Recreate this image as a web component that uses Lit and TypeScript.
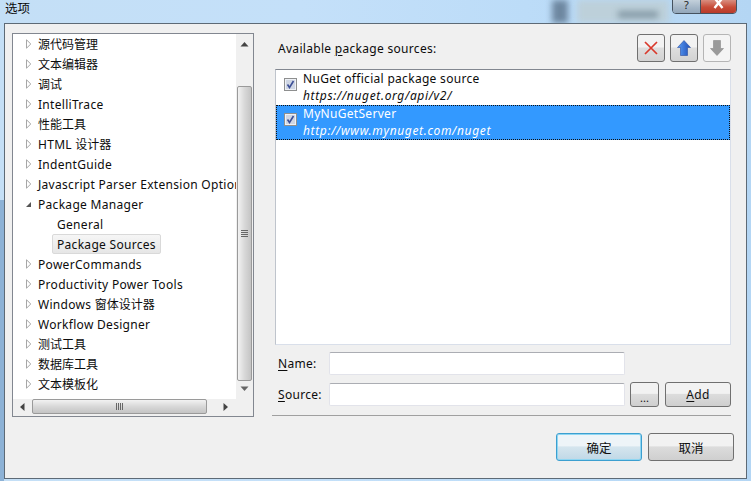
import { LitElement, html, css, svg } from "lit";
import { customElement } from "lit/decorators.js";

type Row = { t: string; kind: "closed" | "open" | "leaf"; sel?: boolean };
const rows: Row[] = [
  { t: "源代码管理", kind: "closed" },
  { t: "文本编辑器", kind: "closed" },
  { t: "调试", kind: "closed" },
  { t: "IntelliTrace", kind: "closed" },
  { t: "性能工具", kind: "closed" },
  { t: "HTML 设计器", kind: "closed" },
  { t: "IndentGuide", kind: "closed" },
  { t: "Javascript Parser Extension Options", kind: "closed" },
  { t: "Package Manager", kind: "open" },
  { t: "General", kind: "leaf" },
  { t: "Package Sources", kind: "leaf", sel: true },
  { t: "PowerCommands", kind: "closed" },
  { t: "Productivity Power Tools", kind: "closed" },
  { t: "Windows 窗体设计器", kind: "closed" },
  { t: "Workflow Designer", kind: "closed" },
  { t: "测试工具", kind: "closed" },
  { t: "数据库工具", kind: "closed" },
  { t: "文本模板化", kind: "closed" },
];

const check = svg`<svg class="cb" width="13" height="13" viewBox="0 0 13 13"><rect x=".5" y=".5" width="12" height="12" fill="#eef1f6" stroke="#8e8f8f"/><rect x="2" y="2" width="9" height="9" fill="#cfd6e4"/><path d="M3.5 6.5 5.5 9.5 9.5 3" fill="none" stroke="#3c4f96" stroke-width="1.6"/></svg>`;

const split = (t: string) =>
  t.split(/([\u4e00-\u9fff]+)/).map((p) =>
    /[\u4e00-\u9fff]/.test(p) ? html`<span class="cjk">${p}</span>` : p
  );

@customElement("app-root")
export class AppRoot extends LitElement {
  static styles = css`
    :host { display: block; width: 751px; height: 481px; position: relative; overflow: hidden;
      background: linear-gradient(90deg, #c4dff6 0%, #c4e0f9 40%, #bcdcf8 70%, #b4d6f4 100%);
      font-family: "Noto Sans", "Noto Sans CJK SC", sans-serif; font-size: 12px; color: #0c0c0c; letter-spacing: .3px; }
    .cjk { letter-spacing: 0; }
    .blob { position: absolute; top: 0; height: 23px; filter: blur(3px); }
    .b1 { left: 552px; width: 16px; background: #6d87a0; }
    .b2 { left: 577px; width: 92px; background: #bdd0da; }
    .b3 { left: 618px; width: 40px; top: 11px; height: 7px; background: #8499a6; }
    .b4 { left: 0; top: 200px; width: 4px; height: 281px; background: #8db2d6; filter: none; }
    .title { position: relative; height: 22px; padding: 1px 0 0 5px; line-height: 15px; font-size: 12.5px; letter-spacing: 0; }
    .caption { position: absolute; top: -1px; left: 672px; width: 65px; height: 15px; display: flex;
      border: 1px solid #45525f; border-radius: 0 0 4px 4px; overflow: hidden; box-sizing: border-box; }
    .help { width: 27px; background: linear-gradient(#c3d0db, #a3b5c6 60%, #93a7ba); border-right: 1px solid #45525f; color: #222; font-size: 11px; line-height: 10px; text-align: center; letter-spacing: 0; }
    .close { flex: 1; background: linear-gradient(#d98e80, #c84c38 55%, #b83a2a); display: flex; align-items: flex-start; justify-content: center; }
    .dialog { position: relative; margin-left: 4px; width: 743px; height: 456px; box-sizing: border-box;
      border: 1px solid #5d6a76; background: #f0f0f0; padding: 9px 0 0 7px; display: flex; gap: 18px; }
    .tree { width: 242px; height: 384px; box-sizing: border-box; border: 1px solid #828790; background: #fff;
      display: grid; grid-template-columns: 1fr 17px; grid-template-rows: 1fr 17px; }
    .items { overflow: hidden; min-width: 0; }
    .row { height: 20px; display: flex; align-items: center; white-space: nowrap; padding-left: 12px; position: relative; }
    .row.leaf { padding-left: 43px; }
    .row svg { flex: none; width: 7px; height: 10px; margin-right: 5px; }
    .row .txt { padding: 0 4px; height: 20px; line-height: 19px; box-sizing: border-box; margin-left: -4px; border: 1px solid transparent; border-radius: 2px; }
    .row.sel .txt { background: linear-gradient(#f6f6f6, #e6e6e6); border-color: #d9d9d9; }
    .vbar { background: #f0f0f0; display: flex; flex-direction: column; align-items: center; padding-top: 52px; box-sizing: border-box; position: relative; }
    .vthumb { width: 15px; height: 295px; box-sizing: border-box; border: 1px solid #9a9a9a; border-radius: 2px;
      background: linear-gradient(90deg, #f2f2f2, #d8d8d8 50%, #c4c4c4); display: flex; align-items: center; justify-content: center; }
    .arrow { position: absolute; }
    .hbar { background: #f0f0f0; position: relative; padding: 0 0 0 19px; display: flex; }
    .hthumb { width: 175px; height: 15px; box-sizing: border-box; border: 1px solid #9a9a9a; border-radius: 2px;
      background: linear-gradient(#f2f2f2, #d8d8d8 50%, #c4c4c4); display: flex; align-items: center; justify-content: center; }
    .corner { background: #f0f0f0; }
    .right { width: 462px; display: flex; flex-direction: column; }
    .head { height: 28px; margin: 1px 3px 0 6px; display: flex; align-items: center; }
    .head .lbl { flex: 1; }
    .tb { width: 28px; height: 28px; box-sizing: border-box; margin-left: 5px; border: 1px solid #707070; border-radius: 3px;
      background: linear-gradient(#f2f2f2 46%, #dedede 50%, #d2d2d2); display: flex; align-items: center; justify-content: center; }
    .tb.off { border-color: #b5b5b5; background: #f4f4f4; }
    .list { margin: 7px 3px 0 3px; height: 276px; box-sizing: border-box; background: #fff; border: 1px solid #828790; border-right-color: #d9dfea; border-bottom-color: #d9dfea; border-left-color: #bfc4cc; }
    .item { height: 35px; display: flex; align-items: center; padding-left: 8px; box-sizing: border-box; }
    .item.sel { background: #3399ff; color: #fff; outline: 1px dotted #111; outline-offset: -1px; }
    .cb { flex: none; margin: -6px 6px 0 0; }
    .lines { line-height: 17px; white-space: nowrap; margin-top: -2px; }
    .url { font-style: italic; letter-spacing: .65px; }
    .form { margin: 7px 3px 0 6px; display: grid; grid-template-columns: 51px 296px auto; row-gap: 8px; align-items: center; }
    .form label { line-height: 23px; }
    u { text-underline-offset: 2px; }
    input { box-sizing: border-box; width: 296px; height: 23px; background: #fff; border: 1px solid #e2e3ea; border-top-color: #abadb3; border-radius: 2px; outline: none; display: block; margin: 0; padding: 0; }
    .actions { display: flex; gap: 6px; margin-left: 5px; height: 23px; align-items: center; }
    .btn { box-sizing: border-box; border: 1px solid #707070; border-radius: 3px; background: linear-gradient(#f2f2f2 45%, #dcdcdc 50%, #cfcfcf);
      display: flex; align-items: center; justify-content: center; color: #111; }
    .dots { width: 29px; height: 25px; font-size: 11px; padding-top: 5px; letter-spacing: 0; }
    .add { width: 66px; height: 25px; }
    .sep { margin: 9px 3px 0 0; height: 1px; background: #a0a0a0; }
    .foot { display: flex; justify-content: flex-end; gap: 6px; margin-top: 17px; }
    .big { width: 86px; height: 28px; letter-spacing: 0; font-size: 12.5px; }
    .ok { border-color: #3c9fd0; box-shadow: inset 0 0 0 1px #8fd6f2; background: linear-gradient(#eef4f8 45%, #d5e5ee 50%, #c0d8e6); }
  `;

  private tri(kind: string) {
    if (kind === "open") return html`<svg viewBox="0 0 7 10"><path d="M1 8 6 8 6 3Z" fill="#555"/></svg>`;
    return html`<svg viewBox="0 0 7 10"><path d="M1.5 .8 5.8 5 1.5 9.2Z" fill="#fff" stroke="#a6a6a6"/></svg>`;
  }

  render() {
    return html`
      <div class="blob b1"></div><div class="blob b2"></div><div class="blob b3"></div><div class="blob b4"></div>
      <div class="title">选项</div>
      <div class="caption">
        <div class="help">?</div>
        <div class="close"><svg width="13" height="10" viewBox="0 0 13 10"><path d="M2.5-2 10.5 8M10.5-2 2.5 8" stroke="#fff" stroke-width="2.4"/></svg></div>
      </div>
      <div class="dialog">
        <div class="tree">
          <div class="items">
            ${rows.map((r) => html`<div class="row ${r.kind === "leaf" ? "leaf" : ""} ${r.sel ? "sel" : ""}">
              ${r.kind === "leaf" ? "" : this.tri(r.kind)}<span class="txt">${split(r.t)}</span></div>`)}
          </div>
          <div class="vbar">
            <svg class="arrow" style="top:8px" width="9" height="5" viewBox="0 0 9 5"><path d="M4.5 0 8.5 4.5H.5Z" fill="#444"/></svg>
            <div class="vthumb"><svg width="7" height="7" viewBox="0 0 7 7"><path d="M0 .5H7M0 2.5H7M0 4.5H7M0 6.5H7" stroke="#666"/></svg></div>
            <svg class="arrow" style="bottom:8px" width="9" height="5" viewBox="0 0 9 5"><path d="M4.5 5 8.5 .5H.5Z" fill="#666"/></svg>
          </div>
          <div class="hbar">
            <svg class="arrow" style="left:7px;top:4px" width="5" height="8" viewBox="0 0 5 8"><path d="M0 4 4.5 0V8Z" fill="#444"/></svg>
            <div class="hthumb"><svg width="7" height="7" viewBox="0 0 7 7"><path d="M.5 0V7M2.5 0V7M4.5 0V7M6.5 0V7" stroke="#666"/></svg></div>
            <svg class="arrow" style="right:8px;top:4px" width="5" height="8" viewBox="0 0 5 8"><path d="M5 4 .5 0V8Z" fill="#444"/></svg>
          </div>
          <div class="corner"></div>
        </div>
        <div class="right">
          <div class="head">
            <div class="lbl">Available <u>p</u>ackage sources:</div>
            <div class="tb"><svg width="14" height="14" viewBox="0 0 14 14"><path d="M1 1 13 13M13 1 1 13" stroke="#d9392c" stroke-width="1.7"/></svg></div>
            <div class="tb"><svg width="14" height="16" viewBox="0 0 14 16"><defs><linearGradient id="u" x1="0" x2="1"><stop offset="0" stop-color="#5a9cf4"/><stop offset="1" stop-color="#1f4fb8"/></linearGradient></defs><path d="M7 .5 13.5 7.5H10.5V15.5H3.5V7.5H.5Z" fill="url(#u)" stroke="#2a4ea0" stroke-width=".6"/></svg></div>
            <div class="tb off"><svg width="14" height="16" viewBox="0 0 14 16"><path d="M3.5 .5H10.5V8.5H13.5L7 15.5 .5 8.5H3.5Z" fill="#9a9a9a" stroke="#8a8a8a" stroke-width=".6"/></svg></div>
          </div>
          <div class="list">
            <div class="item">${check}<div class="lines"><div>NuGet official package source</div><div class="url">https://nuget.org/api/v2/</div></div></div>
            <div class="item sel">${check}<div class="lines"><div>MyNuGetServer</div><div class="url">http://www.mynuget.com/nuget</div></div></div>
          </div>
          <div class="form">
            <label><u>N</u>ame:</label><input />
            <div></div>
            <label><u>S</u>ource:</label><input />
            <div class="actions"><div class="btn dots">...</div><div class="btn add"><span><u>A</u>dd</span></div></div>
          </div>
          <div class="sep"></div>
          <div class="foot">
            <div class="btn big ok">确定</div>
            <div class="btn big">取消</div>
          </div>
        </div>
      </div>
    `;
  }
}
